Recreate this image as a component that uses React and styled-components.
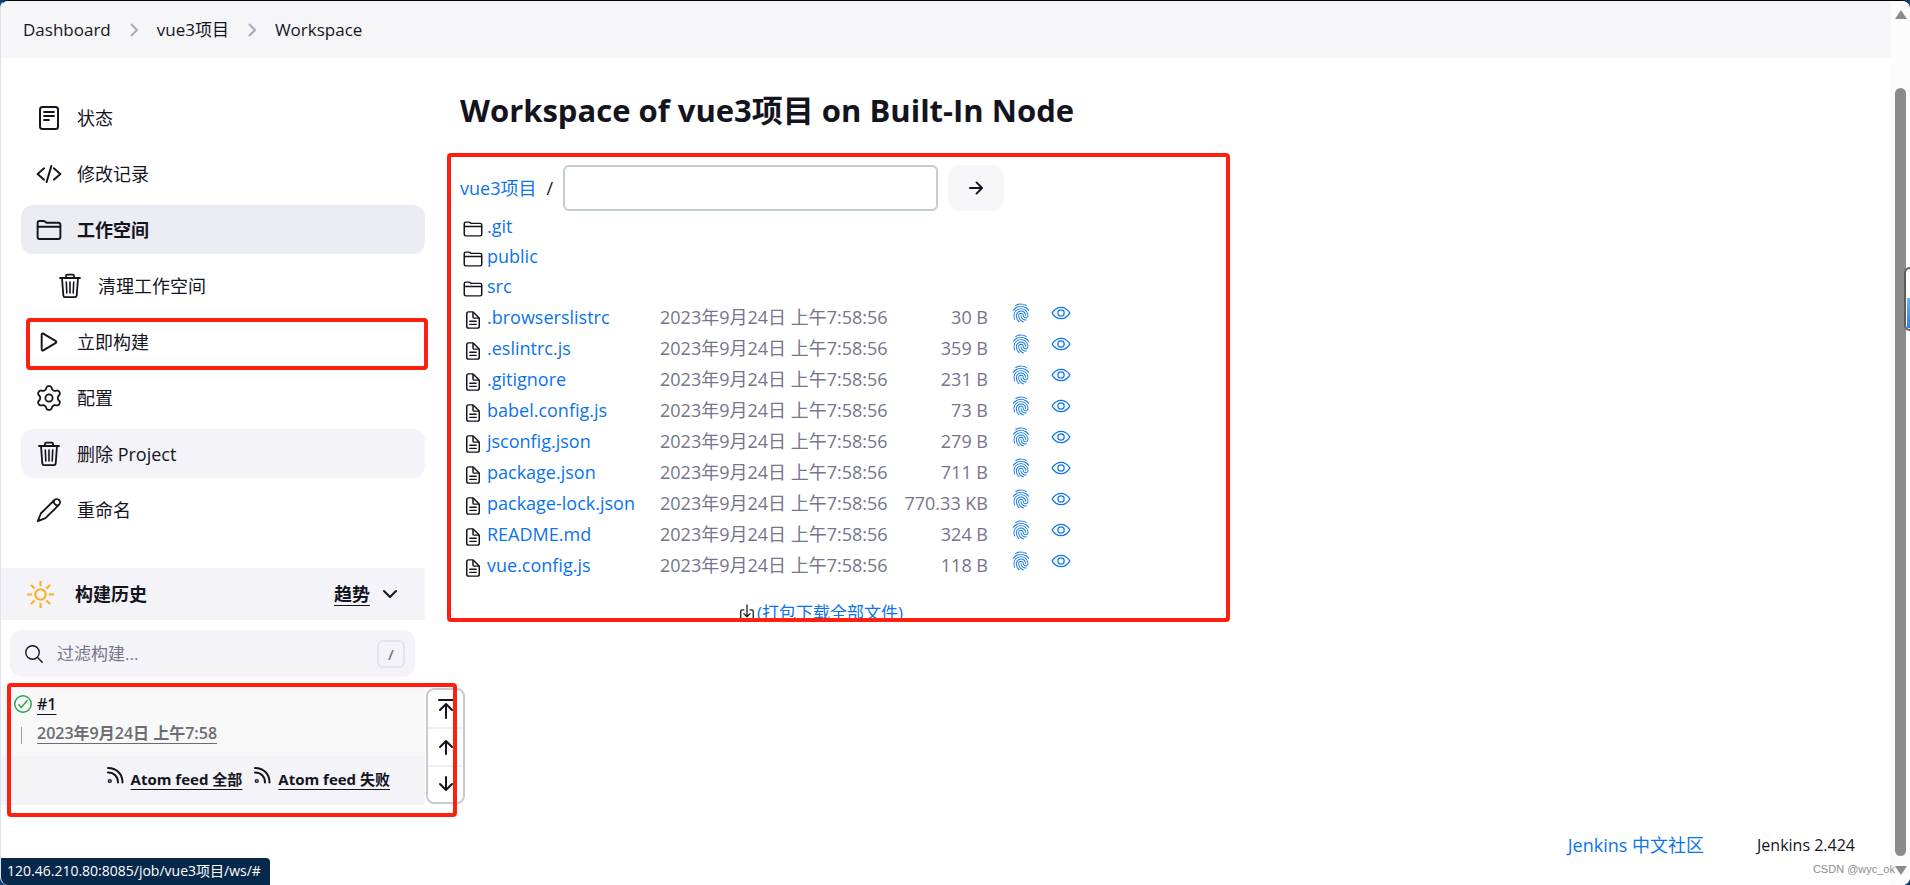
import styled, { createGlobalStyle } from 'styled-components'
import {
    IoArrowForwardOutline,
    IoCheckmarkCircleOutline,
    IoCodeSlashOutline,
    IoDocumentTextOutline,
    IoDownloadOutline,
    IoEyeOutline,
    IoFingerPrintOutline,
    IoFolderOutline,
    IoPlayOutline,
    IoSearchOutline
} from 'react-icons/io5'

const GlobalStyle = createGlobalStyle`
:root {
    --text: #14141f;
    --blue: #0b74ec;
    --muted: #75758c;
    --panel: #f3f3f8;
    --border: #c3ccd1;
    --red: #ff1f10;
    --font: "Open Sans", "Noto Sans CJK SC", sans-serif;
}
* {
    box-sizing: border-box;
}
body {
    margin: 0;
    background: #0b4376;
    color: var(--text);
    font: 400 17px/24px var(--font);
}
svg {
    display: block;
    flex: none;
}
button, input {
    font: inherit;
    color: inherit;
}
`

const Browser = styled.div`
position: relative;
display: grid;
grid-template-columns: minmax(0, 1fr) 19px;
min-height: 100vh;
overflow: hidden;
background: #fff;
border-top: 1px solid #05050f;
border-left: 1px solid #dbe4ef;
border-radius: 8px;
`

const Page = styled.div`
display: flex;
flex-direction: column;
`

const Breadcrumbs = styled.nav`
display: flex;
align-items: center;
height: 57px;
padding-inline: 22px;
gap: 18px;
background: #f6f6f9;

a {
    color: var(--text);
    text-decoration: none;
}
`

const Columns = styled.div`
display: grid;
grid-template-columns: 424px minmax(0, 1fr);
flex: 1;
`

const Tasks = styled.nav`
display: flex;
flex-direction: column;
gap: 7px;
padding: 35px 0 34px 20px;
`

const Task = styled.a`
display: flex;
align-items: center;
gap: 15px;
height: 49px;
padding-inline-start: ${({ $nested }) => ($nested ? '36px' : '15px')};
border-radius: 12px;
background: ${({ $background }) => $background || 'transparent'};
color: var(--text);
font-size: 18px;
font-weight: ${({ $active }) => ($active ? 700 : 400)};
text-decoration: none;

[stroke-width="32"] {
    stroke-width: 38px;
}
`

const HistoryHeader = styled.header`
display: flex;
align-items: center;
height: 52px;
padding: 0 27px 0 26px;
background: var(--panel);
font-size: 18px;
font-weight: 700;

h2 {
    flex: 1;
    margin: 0;
    margin-inline-start: 21px;
    font: inherit;
}
a {
    color: inherit;
    text-underline-offset: 4px;
    text-decoration-thickness: 1px;
    margin-inline-end: 12px;
}
`

const SearchBar = styled.label`
display: flex;
align-items: center;
gap: 12px;
height: 47px;
margin: 10px 10px 10px 9px;
padding: 0 10px 0 13px;
border-radius: 12px;
background: var(--panel);

input {
    flex: 1;
    min-width: 0;
    padding: 0;
    border: 0;
    outline: 0;
    background: transparent;
}
input::placeholder {
    color: var(--muted);
    opacity: 1;
}
kbd {
    width: 28px;
    height: 28px;
    border: 2px solid #e3e3ee;
    border-radius: 6px;
    color: var(--muted);
    font: 600 15px/24px var(--font);
    text-align: center;
}
`

const BuildArea = styled.div`
position: relative;
`

const BuildRow = styled.div`
display: grid;
grid-template-columns: 22px 1fr;
align-content: start;
gap: 5px 3px;
height: 69px;
padding: 4px 0 0 11px;
border-top: 1px solid #f1f1f3;
background: #f8f8f8;
font-size: 16px;
font-weight: 600;

a {
    justify-self: start;
    color: var(--text);
    text-underline-offset: 4px;
    text-decoration-thickness: 1px;
}
a.date {
    color: #6c6c73;
}
svg {
    align-self: center;
    color: #1ea64b;
}
`

const Tick = styled.span`
width: 1px;
height: 17px;
margin: 6px 0 0 9px;
background: #9c9ca3;
`

const Feeds = styled.div`
display: flex;
align-items: center;
justify-content: flex-end;
height: 49px;
gap: 12px;
padding: 0 35px 3px 0;
background: var(--panel);

a {
    display: flex;
    gap: 7px;
    color: var(--text);
    font-size: 15px;
    font-weight: 700;
    text-decoration: underline;
    text-underline-offset: 4px;
    text-decoration-thickness: 1px;
}
`

const Pager = styled.div`
position: absolute;
top: 1px;
left: 425px;
display: grid;
grid-template-rows: repeat(3, 1fr);
width: 39px;
height: 116px;
overflow: hidden;
border: 2px solid var(--border);
border-radius: 8px;
background: #fff;

button {
    display: grid;
    place-items: center;
    padding: 0;
    border: 0;
    background: transparent;
}
button + button {
    border-top: 2px solid #f0f0f3;
}
`

const Content = styled.main`
padding: 32px 36px 0 35px;

h1 {
    margin: 0;
    margin-block-end: 34px;
    font-size: 31px;
    line-height: 40px;
    font-weight: 700;
}
a {
    color: var(--blue);
    text-decoration: none;
}
`

const Files = styled.section`
position: relative;
max-width: 720px;
font-size: 18px;
`

const PathForm = styled.form`
display: flex;
align-items: center;
gap: 10px;
height: 47px;

input {
    width: 375px;
    height: 46px;
    padding-inline: 10px;
    border: 2px solid var(--border);
    border-radius: 6px;
    background: #fff;
}
button {
    display: grid;
    place-items: center;
    width: 56px;
    height: 46px;
    padding: 0;
    border: 0;
    border-radius: 12px;
    background: #f7f7f9;
}
`

const FileTable = styled.table`
table-layout: fixed;
width: 621px;
border-spacing: 0;

td {
    padding: 0;
    line-height: 24px;
    white-space: nowrap;
}
`

const FileRow = styled.tr`
height: ${({ $folder }) => ($folder ? '30px' : '31px')};

.icon svg {
    margin: 6px 0 0 3px;
}
.icon [stroke-width="32"] {
    stroke-width: 38px;
}
.date, .size {
    color: var(--muted);
}
.size {
    padding-inline-end: 13px;
    text-align: right;
}
.action svg {
    margin: 0 auto 8px;
}
`

const Download = styled.div`
display: flex;
align-items: center;
justify-content: center;
margin-block-start: 21px;
font-size: 17px;
`

const Footer = styled.footer`
display: flex;
align-items: center;
justify-content: flex-end;
gap: 53px;
padding: 0 36px 28px 0;
font-size: 16px;

a {
    color: var(--blue);
    font-size: 18px;
    text-decoration: none;
}
`

const Outline = styled.div`
position: absolute;
top: ${({ $top }) => $top}px;
left: ${({ $left }) => $left}px;
width: ${({ $width }) => $width}px;
height: ${({ $height }) => $height}px;
border: 4px solid var(--red);
border-radius: 4px;
pointer-events: none;
`

const TaskSlot = styled.div`
position: relative;
`

const Scrollbar = styled.div`
display: flex;
flex-direction: column;
align-items: center;
padding: 9px 0 10px;
background: #fcfcfc;
color: #8b8b8b;
`

const Thumb = styled.div`
flex: 1;
width: 11px;
margin: 69px 0 10px;
border-radius: 6px;
background: #8b8b8b;
`

const SideWidget = styled.div`
position: absolute;
top: 266px;
right: -20px;
width: 26px;
height: 64px;
padding: 29px 1px 1px;
border: 2px solid #5b5b5b;
border-radius: 6px;
background: #fff;

&::after {
    content: "";
    display: block;
    height: 30px;
    background: linear-gradient(#5fb8fb, #2f7df6);
}
`

const StatusUrl = styled.div`
position: absolute;
left: -1px;
bottom: 0;
height: 27px;
padding: 0 9px 0 7px;
border-radius: 0 4px 0 0;
background: #06294b;
color: #fff;
font-size: 14px;
line-height: 26px;
`

const Watermark = styled.div`
position: absolute;
right: 15px;
bottom: 8px;
color: #8c8c8c;
font: 11px/16px "Liberation Sans", sans-serif;
`

const Stroke = ({ size = 26, box = 26, width = 2, color = 'currentColor', children }) => (
    <svg
        width={size}
        height={size}
        viewBox={`0 0 ${box} ${box}`}
        fill='none'
        stroke={color}
        strokeWidth={width}
        strokeLinecap='round'
        strokeLinejoin='round'
    >
        {children}
    </svg>
)

const StatusIcon = () => (
    <Stroke>
        <rect x='4' y='2' width='18' height='22' rx='2.5' />
        <path d='M8 7h10M8 11h10M8 15h5' strokeWidth='1.8' />
    </Stroke>
)

const TrashIcon = () => (
    <Stroke width={1.8}>
        <path d='M3 5h20M9 5V2.800a1.200 1.200 0 0 1 1.200-1.200h5.600a1.200 1.200 0 0 1 1.200 1.200V5' />
        <path d='M5 5l1.300 17.400a1.800 1.800 0 0 0 1.800 1.700h9.800a1.800 1.800 0 0 0 1.800-1.700L21 5' />
        <path d='M9.300 9l.5 11M13 9v11M16.700 9l-.5 11' strokeWidth='1.600' />
    </Stroke>
)

// six lobes, starting from the top one
const gearPoints = Array.from({ length: 96 }, (_, i) => {
    const angle = (i / 96) * Math.PI * 2
    const wave = Math.cos(6 * angle)
    const radius = 10.400 + 1.700 * Math.tanh(1.600 * wave)
    return `${(13 + radius * Math.sin(angle)).toFixed(2)},${(13 - radius * Math.cos(angle)).toFixed(2)}`
}).join(' ')

const GearIcon = () => (
    <Stroke width={1.8}>
        <polygon points={gearPoints} />
        <circle cx='13' cy='13' r='3.600' />
    </Stroke>
)

const PencilIcon = () => (
    <Stroke width={1.8}>
        <path d='M1.800 24.200l3-7.700L18.400 3a3.300 3.300 0 0 1 4.700 4.700L9.500 21.200z' />
        <path d='M17.800 3.800c-.6 2.400 1.800 5 4.400 4.600' />
    </Stroke>
)

const SunIcon = () => (
    <Stroke size={27} box={26} color='#ffb01f'>
        <circle cx='13' cy='13' r='5' />
        <path strokeLinecap='butt' d='M13 0v5M13 21v5M0 13h5M21 13h5M3.800 3.800l3.500 3.500M18.700 18.700l3.500 3.500M3.800 22.200l3.500-3.500M18.700 7.300l3.500-3.500' />
    </Stroke>
)

const FeedIcon = () => (
    <Stroke size={17} box={17} width={2}>
        <circle cx='2.8' cy='14' r='1.4' strokeWidth='1.4' />
        <path d='M1 5.5c6 0 10 4 10 10M1 1c8.500 0 14.500 6 14.500 14.500' />
    </Stroke>
)

const Chevron = () => (
    <svg width='10' height='14' viewBox='0 0 10 14' fill='none' stroke='#a9a9bb' strokeWidth='2'>
        <path d='M2 1l6 6-6 6' />
    </svg>
)

const tasks = [
    { name: '状态', icon: <StatusIcon /> },
    { name: '修改记录', icon: <IoCodeSlashOutline size={26} /> },
    { name: '工作空间', icon: <IoFolderOutline size={26} />, active: true, background: '#ecedf3' },
    { name: '清理工作空间', icon: <TrashIcon />, nested: true },
    { name: '立即构建', icon: <IoPlayOutline size={26} />, outlined: true },
    { name: '配置', icon: <GearIcon /> },
    { name: '删除 Project', icon: <TrashIcon />, background: '#f3f3f8' },
    { name: '重命名', icon: <PencilIcon /> }
]

const folders = ['.git', 'public', 'src']

const files = [
    ['.browserslistrc', '30 B'],
    ['.eslintrc.js', '359 B'],
    ['.gitignore', '231 B'],
    ['babel.config.js', '73 B'],
    ['jsconfig.json', '279 B'],
    ['package.json', '711 B'],
    ['package-lock.json', '770.33 KB'],
    ['README.md', '324 B'],
    ['vue.config.js', '118 B']
]

function Sidebar() {
    return (
        <aside>
            <Tasks>
                {tasks.map(({ name, icon, active, nested, background, outlined }) => (
                    <TaskSlot key={name}>
                        <Task href='#' $active={active} $nested={nested} $background={background}>
                            {icon}
                            <span>{name}</span>
                        </Task>
                        {outlined && <Outline $top={1} $left={5} $width={402} $height={52} />}
                    </TaskSlot>
                ))}
            </Tasks>
            <HistoryHeader>
                <SunIcon />
                <h2>构建历史</h2>
                <a href='#'>趋势</a>
                <Stroke size={16} box={16}>
                    <path d='M2 5l6 6 6-6' />
                </Stroke>
            </HistoryHeader>
            <SearchBar>
                <IoSearchOutline size={22} />
                <input type='text' placeholder='过滤构建...' aria-label='过滤构建' />
                <kbd>/</kbd>
            </SearchBar>
            <BuildArea>
                <BuildRow>
                    <IoCheckmarkCircleOutline size={22} />
                    <a href='#'>#1</a>
                    <Tick />
                    <a href='#' className='date'>2023年9月24日 上午7:58</a>
                </BuildRow>
                <Feeds>
                    <a href='#'><FeedIcon />Atom feed 全部</a>
                    <a href='#'><FeedIcon />Atom feed 失败</a>
                </Feeds>
                <Pager>
                    <button type='button' aria-label='first'>
                        <Stroke size={20} box={20}>
                            <path d='M3 1h14M10 19V6M4 11l6-6 6 6' />
                        </Stroke>
                    </button>
                    <button type='button' aria-label='newer'>
                        <Stroke size={20} box={20}>
                            <path d='M10 17V4M4 10l6-6 6 6' />
                        </Stroke>
                    </button>
                    <button type='button' aria-label='older'>
                        <Stroke size={20} box={20}>
                            <path d='M10 3v13M4 10l6 6 6-6' />
                        </Stroke>
                    </button>
                </Pager>
                <Outline $top={-4} $left={6} $width={450} $height={134} />
            </BuildArea>
        </aside>
    )
}

function Workspace() {
    return (
        <Content>
            <h1>Workspace of vue3项目 on Built-In Node</h1>
            <Files>
                <PathForm>
                    <a href='#'>vue3项目</a>
                    <span>/</span>
                    <input type='text' aria-label='path' />
                    <button type='button' aria-label='go'>
                        <IoArrowForwardOutline size={20} />
                    </button>
                </PathForm>
                <FileTable>
                    <colgroup>
                        <col width='27' />
                        <col width='173' />
                        <col width='225' />
                        <col width='116' />
                        <col width='40' />
                        <col width='40' />
                    </colgroup>
                    <tbody>
                        {folders.map((name) => (
                            <FileRow key={name} $folder>
                                <td className='icon'><IoFolderOutline size={20} /></td>
                                <td colSpan={5}><a href='#'>{name}</a></td>
                            </FileRow>
                        ))}
                        {files.map(([name, size]) => (
                            <FileRow key={name}>
                                <td className='icon'><IoDocumentTextOutline size={20} /></td>
                                <td><a href='#'>{name}</a></td>
                                <td className='date'>2023年9月24日 上午7:58:56</td>
                                <td className='size'>{size}</td>
                                <td className='action'><a href='#' aria-label='fingerprint'><IoFingerPrintOutline size={20} /></a></td>
                                <td className='action'><a href='#' aria-label='view'><IoEyeOutline size={20} /></a></td>
                            </FileRow>
                        ))}
                    </tbody>
                </FileTable>
                <Download>
                    <IoDownloadOutline size={20} />
                    <a href='#'>(打包下载全部文件)</a>
                </Download>
                <Outline $top={-11} $left={-13} $width={783} $height={469} />
            </Files>
        </Content>
    )
}

function App() {
    return (
        <>
            <GlobalStyle />
            <Browser>
                <Page>
                    <Breadcrumbs>
                        <a href='#'>Dashboard</a>
                        <Chevron />
                        <a href='#'>vue3项目</a>
                        <Chevron />
                        <a href='#'>Workspace</a>
                    </Breadcrumbs>
                    <Columns>
                        <Sidebar />
                        <Workspace />
                    </Columns>
                    <Footer>
                        <a href='#'>Jenkins 中文社区</a>
                        <span>Jenkins 2.424</span>
                    </Footer>
                </Page>
                <Scrollbar>
                    <svg width='12' height='9' viewBox='0 0 12 9' fill='currentColor'><path d='M6 0l6 9H0z' /></svg>
                    <Thumb />
                    <svg width='12' height='9' viewBox='0 0 12 9' fill='currentColor'><path d='M0 0h12L6 9z' /></svg>
                </Scrollbar>
                <SideWidget />
                <StatusUrl>120.46.210.80:8085/job/vue3项目/ws/#</StatusUrl>
                <Watermark>CSDN @wyc_ok</Watermark>
            </Browser>
        </>
    )
}

export default App
